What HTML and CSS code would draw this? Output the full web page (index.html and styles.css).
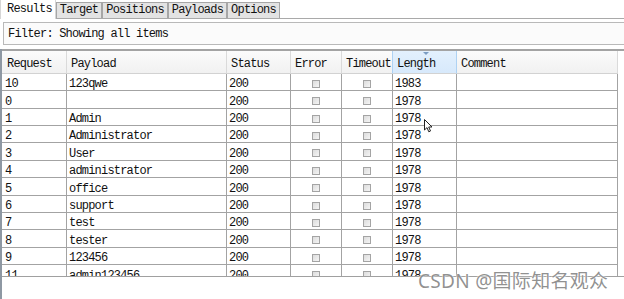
FILE: index.html
```html
<!DOCTYPE html>
<html>
<head>
<meta charset="utf-8">
<link rel="stylesheet" href="styles.css">
</head>
<body>
<div class="app">
  <div class="tabs">
    <div class="tab active">Results</div>
    <div class="tab">Target</div>
    <div class="tab">Positions</div>
    <div class="tab">Payloads</div>
    <div class="tab">Options</div>
  </div>
  <div class="filter">Filter: Showing all items</div>
  <div class="results">
    <div class="viewport">
      <div class="row head">
        <div class="cell">Request</div>
        <div class="cell">Payload</div>
        <div class="cell">Status</div>
        <div class="cell">Error</div>
        <div class="cell">Timeout</div>
        <div class="cell sorted">Length<span class="caret"></span></div>
        <div class="cell">Comment</div>
      </div>
      <div class="row"><div class="cell">10</div><div class="cell">123qwe</div><div class="cell">200</div><div class="cell chk"><span class="box"></span></div><div class="cell chk"><span class="box"></span></div><div class="cell">1983</div><div class="cell"></div></div>
      <div class="row"><div class="cell">0</div><div class="cell"></div><div class="cell">200</div><div class="cell chk"><span class="box"></span></div><div class="cell chk"><span class="box"></span></div><div class="cell">1978</div><div class="cell"></div></div>
      <div class="row"><div class="cell">1</div><div class="cell">Admin</div><div class="cell">200</div><div class="cell chk"><span class="box"></span></div><div class="cell chk"><span class="box"></span></div><div class="cell">1978</div><div class="cell"></div></div>
      <div class="row"><div class="cell">2</div><div class="cell">Administrator</div><div class="cell">200</div><div class="cell chk"><span class="box"></span></div><div class="cell chk"><span class="box"></span></div><div class="cell">1978</div><div class="cell"></div></div>
      <div class="row"><div class="cell">3</div><div class="cell">User</div><div class="cell">200</div><div class="cell chk"><span class="box"></span></div><div class="cell chk"><span class="box"></span></div><div class="cell">1978</div><div class="cell"></div></div>
      <div class="row"><div class="cell">4</div><div class="cell">administrator</div><div class="cell">200</div><div class="cell chk"><span class="box"></span></div><div class="cell chk"><span class="box"></span></div><div class="cell">1978</div><div class="cell"></div></div>
      <div class="row"><div class="cell">5</div><div class="cell">office</div><div class="cell">200</div><div class="cell chk"><span class="box"></span></div><div class="cell chk"><span class="box"></span></div><div class="cell">1978</div><div class="cell"></div></div>
      <div class="row"><div class="cell">6</div><div class="cell">support</div><div class="cell">200</div><div class="cell chk"><span class="box"></span></div><div class="cell chk"><span class="box"></span></div><div class="cell">1978</div><div class="cell"></div></div>
      <div class="row"><div class="cell">7</div><div class="cell">test</div><div class="cell">200</div><div class="cell chk"><span class="box"></span></div><div class="cell chk"><span class="box"></span></div><div class="cell">1978</div><div class="cell"></div></div>
      <div class="row"><div class="cell">8</div><div class="cell">tester</div><div class="cell">200</div><div class="cell chk"><span class="box"></span></div><div class="cell chk"><span class="box"></span></div><div class="cell">1978</div><div class="cell"></div></div>
      <div class="row"><div class="cell">9</div><div class="cell">123456</div><div class="cell">200</div><div class="cell chk"><span class="box"></span></div><div class="cell chk"><span class="box"></span></div><div class="cell">1978</div><div class="cell"></div></div>
      <div class="row"><div class="cell">11</div><div class="cell">admin123456</div><div class="cell">200</div><div class="cell chk"><span class="box"></span></div><div class="cell chk"><span class="box"></span></div><div class="cell">1978</div><div class="cell"></div></div>
    </div>
    <div class="lower"></div>
  </div>
  <svg class="cursor" width="10" height="14" viewBox="0 0 10 14"><path d="M0.5 0.5 L0.5 11 L3 8.6 L4.8 12.8 L6.5 12 L4.7 8 L8 8 Z" fill="#fff" stroke="#222" stroke-width="1"/></svg>
  <div class="watermark">CSDN @国际知名观众</div>
</div>
</body>
</html>
```
FILE: styles.css
```css
html, body {
  margin: 0;
  padding: 0;
  background: #ffffff;
}
body {
  width: 624px;
  height: 299px;
  overflow: hidden;
  font-family: "Liberation Mono", monospace;
  font-size: 12px;
  letter-spacing: -0.8px;
  color: #111;
}
.app {
  position: relative;
  width: 624px;
  height: 299px;
  display: flex;
  flex-direction: column;
}
.tabs {
  box-sizing: border-box;
  height: 19px;
  display: flex;
  align-items: flex-end;
  border-bottom: 1px solid #a9a9a9;
  flex: none;
}
.tab {
  box-sizing: border-box;
  height: 16px;
  line-height: 13px;
  padding: 1px 3px 0 3px;
  background: #e3e3e3;
  border: 1px solid #a6a6a6;
  border-bottom: none;
  white-space: nowrap;
}
.tab.active {
  height: 19px;
  margin-bottom: -1px;
  padding: 3px 3px 0 6px;
  background: #ffffff;
  border-color: #d6d6d6;
  border-top: none;
}
.filter {
  box-sizing: border-box;
  flex: none;
  margin: 3px 0 0 3px;
  height: 23px;
  padding: 4px 0 0 4px;
  line-height: 14px;
  background: #fbfbfb;
  border: 1px solid #b9b9b9;
  border-right: none;
}
.results {
  flex: 1;
  margin-top: 4px;
  display: flex;
  flex-direction: column;
  border-left: 2px solid #8e98a3;
}
.viewport {
  box-sizing: border-box;
  height: 228px;
  flex: none;
  overflow: hidden;
  border-top: 2px solid #a3a3a3;
  border-bottom: 1px solid #a0a0a0;
}
.lower {
  flex: 1;
  background: #ffffff;
}
.row {
  display: grid;
  grid-template-columns: 65px 160px 64px 51px 51px 64px 161px;
  width: 617px;
  height: 17.42px;
}
.cell {
  box-sizing: border-box;
  border-right: 1px solid #a3a3a3;
  border-bottom: 1px solid #a3a3a3;
  padding: 3.5px 0 0 2px;
  line-height: 14px;
  white-space: nowrap;
  overflow: hidden;
}
.cell:first-child {
  padding-left: 3px;
}
.row.head {
  height: 22.7px;
}
.head .cell {
  position: relative;
  padding: 5.5px 0 0 4px;
  background: linear-gradient(#fbfbfb, #f1f1f1);
  border-right: 1px solid #dadada;
  border-bottom: 1px solid #d2d2d2;
  overflow: visible;
}
.head .cell:first-child {
  padding-left: 5px;
}
.head .cell.sorted {
  background: linear-gradient(#e3f0fd, #d7e9fb);
  border-left: 1px solid #aed2f3;
  border-right: 1px solid #aed2f3;
  margin-left: -1px;
}
.caret {
  position: absolute;
  left: 30px;
  top: 1px;
  width: 0;
  height: 0;
  border-left: 3px solid transparent;
  border-right: 3px solid transparent;
  border-top: 3px solid #7a9cc2;
}
.cell.chk {
  display: flex;
  justify-content: center;
  padding: 6px 0 0 0;
}
.box {
  box-sizing: border-box;
  width: 8px;
  height: 8px;
  border: 1px solid #a4a4a4;
  background: linear-gradient(135deg, #dcdcdc, #f5f5f5);
}
.cursor {
  position: absolute;
  left: 424px;
  top: 119px;
}
.watermark {
  position: absolute;
  left: 418px;
  top: 269px;
  font-family: "Noto Sans", "Noto Sans CJK SC", sans-serif;
  font-size: 19px;
  letter-spacing: 0.3px;
  line-height: 24px;
  color: rgba(125, 125, 125, 0.85);
  text-shadow: 0 0 2px #fff, 0 0 1px #fff;
  white-space: nowrap;
}
```
